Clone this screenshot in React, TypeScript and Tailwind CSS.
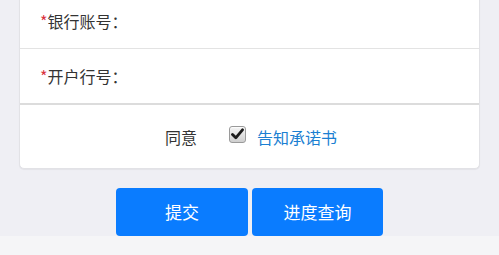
import React from "react";

const font = { fontFamily: '"Noto Sans CJK SC", "Noto Sans", sans-serif' };

function Check() {
  return (
    <span className="flex h-[17px] w-[17px] items-center justify-center rounded-[3px] border border-[#9a9a9a] bg-gradient-to-b from-[#f4f4f4] to-[#cfcfcf] shadow-[inset_0_1px_1px_rgba(255,255,255,0.8)]">
      <svg width="13" height="12" viewBox="0 0 13 12">
        <path d="M1.5 6.5 L4.8 9.8 L11.5 1.8" fill="none" stroke="#1a1a1a" strokeWidth="2.8" strokeLinecap="round" strokeLinejoin="round" />
      </svg>
    </span>
  );
}

export default function App() {
  return (
    <div className="flex h-[255px] w-[499px] flex-col overflow-hidden bg-[#efeff4]" style={font}>
      <div className="mx-[19px] mt-[-8px] flex flex-col rounded-[5px] border border-[#e2e2e6] bg-white shadow-[0_1px_1px_rgba(0,0,0,0.05)]">
        <div className="flex h-[56px] items-center border-b border-[#e3e3e3] pl-[20px] text-[16px] text-[#333]">
          <span className="text-[#d9333f]">*</span>
          <span>银行账号：</span>
        </div>
        <div className="flex h-[56px] items-center border-b-2 border-[#dcdcdc] pl-[20px] text-[16px] text-[#333]">
          <span className="text-[#d9333f]">*</span>
          <span>开户行号：</span>
        </div>
        <div className="flex h-[63px] items-center pl-[145px] text-[16px]">
          <span className="text-[#333]">同意</span>
          <span className="ml-[32px] mt-[-5px]">
            <Check />
          </span>
          <span className="ml-[11px] text-[#1b7fd2]">告知承诺书</span>
        </div>
      </div>
      <div className="mt-[19px] flex h-[48px] justify-center gap-[4px]">
        <button className="h-[48px] w-[132px] rounded-[4px] bg-[#0a7cff] text-[17px] text-white">提交</button>
        <button className="h-[48px] w-[131px] rounded-[4px] bg-[#0a7cff] text-[17px] text-white">进度查询</button>
      </div>
      <div className="flex-1 bg-[#f5f5f7]" />
    </div>
  );
}
